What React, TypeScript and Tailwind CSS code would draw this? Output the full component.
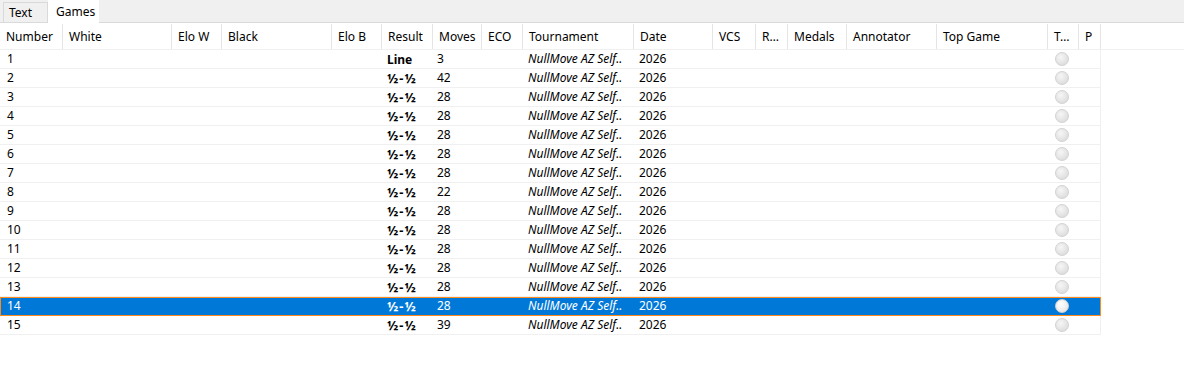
import React from 'react';

type Col = { key: string; label: string; w: string };

const columns: Col[] = [
    { key: 'number', label: 'Number', w: 'w-[63px]' },
    { key: 'white', label: 'White', w: 'w-[109px]' },
    { key: 'elow', label: 'Elo W', w: 'w-[50px]' },
    { key: 'black', label: 'Black', w: 'w-[110px]' },
    { key: 'elob', label: 'Elo B', w: 'w-[50px]' },
    { key: 'result', label: 'Result', w: 'w-[51px]' },
    { key: 'moves', label: 'Moves', w: 'w-[49px]' },
    { key: 'eco', label: 'ECO', w: 'w-[41px]' },
    { key: 'tournament', label: 'Tournament', w: 'w-[111px]' },
    { key: 'date', label: 'Date', w: 'w-[79px]' },
    { key: 'vcs', label: 'VCS', w: 'w-[43px]' },
    { key: 'r', label: 'R…', w: 'w-[32px]' },
    { key: 'medals', label: 'Medals', w: 'w-[59px]' },
    { key: 'annotator', label: 'Annotator', w: 'w-[90px]' },
    { key: 'top', label: 'Top Game', w: 'w-[111px]' },
    { key: 't', label: 'T…', w: 'w-[31px]' },
    { key: 'p', label: 'P', w: 'w-[22px]' },
];

const moves: Record<number, string> = { 1: '3', 2: '42', 8: '22', 15: '39' };

const games = Array.from({ length: 15 }, (_, i) => ({
    number: i + 1,
    result: i === 0 ? 'Line' : '½-½',
    moves: moves[i + 1] ?? '28',
}));

const Radio = ({ active }: { active: boolean }) => (
    <span
        className={`block w-[14px] h-[14px] rounded-full border ${
            active
                ? 'border-[#d0d0d0] bg-[radial-gradient(circle_at_40%_35%,#ffffff,#e0e0e0)]'
                : 'border-[#d2d2d2] bg-[radial-gradient(circle_at_40%_35%,#f6f6f6,#d6d6d6)]'
        }`}
    />
);

const App = () => {
    const selected = 14;

    return (
        <div className="w-[1184px] h-[387px] bg-white text-[12px] text-black font-['Noto_Sans',sans-serif] overflow-hidden">
            {/* tab strip */}
            <div className="h-[23px] bg-[#f0f0f0] border-b border-[#dadada] flex items-end pl-[3px]">
                <div className="h-[20px] w-[45px] border border-b-0 border-[#d9d9d9] bg-[#f0f0f0] flex items-center pl-[5px] leading-none">
                    Text
                </div>
                <div className="h-[23px] w-[51px] bg-white flex items-center pl-[8px] -mb-px leading-none">
                    Games
                </div>
            </div>

            {/* header */}
            <div className="flex h-[26px] border-b border-[#f0f0f0] mt-px">
                {columns.map(c => (
                    <div
                        key={c.key}
                        className={`${c.w} shrink-0 flex items-center pl-[6px] border-r border-[#e5e5e5] whitespace-nowrap overflow-hidden`}
                    >
                        {c.label}
                    </div>
                ))}
            </div>

            {/* rows */}
            <div className="w-[1101px]">
                {games.map(g => {
                    const sel = g.number === selected;
                    return (
                        <div
                            key={g.number}
                            className={`flex h-[19px] items-center ${
                                sel
                                    ? 'bg-[#0078d7] text-white outline outline-[#ff8c1a] -outline-offset-1 border-b border-[#0078d7]'
                                    : 'border-b border-r border-[#f0f0f0]'
                            }`}
                        >
                            <div className="w-[63px] shrink-0 pl-[7px]">{g.number}</div>
                            <div className="w-[109px] shrink-0" />
                            <div className="w-[50px] shrink-0" />
                            <div className="w-[110px] shrink-0" />
                            <div className="w-[50px] shrink-0" />
                            <div
                                className={`w-[51px] shrink-0 pl-[5px] font-bold whitespace-nowrap leading-[19px] ${
                                    g.number === 1 ? '' : 'text-[13px] tracking-[1px]'
                                }`}
                            >
                                {g.result}
                            </div>
                            <div className="w-[49px] shrink-0 pl-[4px]">{g.moves}</div>
                            <div className="w-[41px] shrink-0" />
                            <div className="w-[111px] shrink-0 pl-[5px] italic whitespace-nowrap overflow-hidden">
                                NullMove AZ Self..
                            </div>
                            <div className="w-[79px] shrink-0 pl-[5px]">2026</div>
                            <div className="w-[43px] shrink-0" />
                            <div className="w-[32px] shrink-0" />
                            <div className="w-[59px] shrink-0" />
                            <div className="w-[90px] shrink-0" />
                            <div className="w-[111px] shrink-0" />
                            <div className="w-[31px] shrink-0 flex justify-start pl-[7px]">
                                <Radio active={sel} />
                            </div>
                            <div className="w-[22px] shrink-0" />
                        </div>
                    );
                })}
            </div>
        </div>
    );
};

export default App;
